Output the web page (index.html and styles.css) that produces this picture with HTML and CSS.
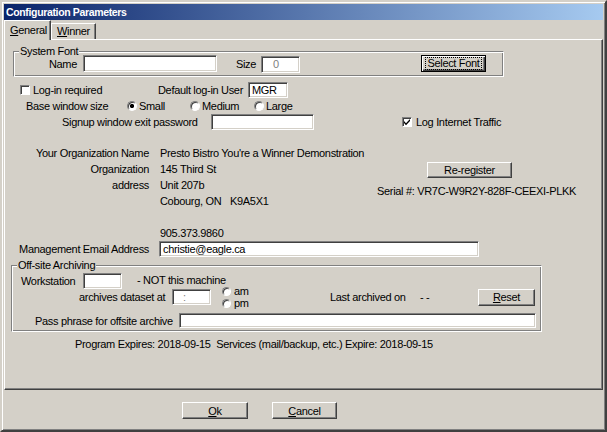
FILE: index.html
```html
<!DOCTYPE html>
<html>
<head>
<meta charset="utf-8">
<link rel="stylesheet" href="styles.css">
</head>
<body>
<div class="window">
  <div class="title">Configuration Parameters</div>
  <div class="tabs">
    <div class="tab sel"><u>G</u>eneral</div>
    <div class="tab t-winner"><u>W</u>inner</div>
  </div>
  <div class="panel">
    <div class="group g1">
      <span class="legend">System Font</span>
      <div class="row r-font">
        <span class="l-name">Name</span>
        <div class="field f-name"></div>
        <span class="l-size">Size</span>
        <div class="field f-size dim">0</div>
        <div class="btn default b-font"><span class="focus">Select Font</span></div>
      </div>
    </div>

    <div class="row r-login">
      <span class="check c-login"></span>
      <span class="t-login">Log-in required</span>
      <span class="t-user">Default log-in User</span>
      <div class="field f-user">MGR</div>
    </div>

    <div class="row r-size">
      <span class="t-base">Base window size</span>
      <span class="radio on"></span><span class="t-small">Small</span>
      <span class="radio"></span><span class="t-medium">Medium</span>
      <span class="radio"></span><span class="t-large">Large</span>
    </div>

    <div class="row r-signup">
      <span class="t-signup">Signup window exit password</span>
      <div class="field f-signup"></div>
      <span class="check c-traffic"><svg width="8" height="8" viewBox="0 0 8 8"><path d="M1 3 L3 5.2 L7 1 L7 3 L3 7.2 L1 5 Z" fill="#000"/></svg></span>
      <span class="t-traffic">Log Internet Traffic</span>
    </div>

    <div class="org">
      <div class="org-grid">
        <span class="k">Your Organization Name</span><span>Presto Bistro You're a Winner Demonstration</span>
        <span class="k">Organization</span><span>145 Third St</span>
        <span class="k">address</span><span>Unit 207b</span>
        <span class="k"></span><span class="city"><span class="c1">Cobourg, ON</span><span>K9A5X1</span></span>
        <span class="k"></span><span></span>
        <span class="k"></span><span>905.373.9860</span>
      </div>
      <div class="org-side">
        <div class="btn b-rereg">Re-register</div>
        <div class="serial">Serial #: VR7C-W9R2Y-828F-CEEXI-PLKK</div>
      </div>
    </div>

    <div class="row r-email">
      <span class="k">Management Email Address</span>
      <div class="field f-email">christie@eagle.ca</div>
    </div>

    <div class="group g2">
      <span class="legend">Off-site Archiving</span>
      <div class="row r-ws">
        <span class="t-ws">Workstation</span>
        <div class="field f-ws"></div>
        <span class="t-not">- NOT this machine</span>
      </div>
      <div class="row r-arch">
        <span class="t-arch">archives dataset at</span>
        <div class="field f-time dim">:</div>
        <div class="ampm">
          <div class="ap"><span class="radio"></span><span>am</span></div>
          <div class="ap"><span class="radio"></span><span>pm</span></div>
        </div>
        <span class="t-last">Last archived on</span>
        <span class="t-dash">- -</span>
        <div class="btn b-reset"><span><u>R</u>eset</span></div>
      </div>
      <div class="row r-pass">
        <span class="t-pass">Pass phrase for offsite archive</span>
        <div class="field f-pass"></div>
      </div>
    </div>

    <div class="expires">Program Expires: 2018-09-15&nbsp; Services (mail/backup, etc.) Expire: 2018-09-15</div>
  </div>

  <div class="actions">
    <div class="btn b-ok"><span><u>O</u>k</span></div>
    <div class="btn b-cancel"><span><u>C</u>ancel</span></div>
  </div>
</div>
</body>
</html>
```

FILE: styles.css
```css
* { box-sizing: border-box; }

body {
  margin: 0;
  background: #d4d0c8;
  font-family: "Liberation Sans", Arial, sans-serif;
  font-size: 11px;
  letter-spacing: -0.32px;
  color: #000;
}

u { text-decoration: underline; text-underline-offset: 1px; }

.window {
  width: 607px;
  height: 432px;
  padding: 2px;
  border: 2px solid;
  border-color: #d4d0c8 #404040 #404040 #d4d0c8;
  box-shadow: inset 1px 1px #fff, inset -1px -1px #808080;
}

.title {
  height: 16px;
  line-height: 16px;
  padding-left: 2px;
  background: linear-gradient(to right, #0a246a, #a6caf0);
  color: #fff;
  font-weight: bold;
  font-size: 10.5px;
  letter-spacing: -0.35px;
}

/* tabs */
.tabs {
  position: relative;
  z-index: 1;
  display: flex;
  align-items: flex-end;
  height: 19px;
}
.tab {
  height: 16px;
  line-height: 15px;
  padding-left: 5px;
  background: #d4d0c8;
  border-top: 1px solid #fff;
  border-left: 1px solid #fff;
  border-right: 1px solid #404040;
  box-shadow: inset -1px 0 #808080;
}
.tab.sel {
  width: 47px;
  height: 20px;
  line-height: 19px;
  margin-bottom: -1px;
}
.t-winner { width: 45px; }

/* panel */
.panel {
  height: 351px;
  border: 1px solid;
  border-color: #fff #404040 #404040 #fff;
  box-shadow: inset -1px -1px #808080;
}

.row {
  display: flex;
  align-items: center;
}

/* etched group box */
.group {
  position: relative;
  border: 1px solid;
  border-color: #808080 #fff #fff #808080;
  box-shadow: inset 1px 1px #fff, inset -1px -1px #808080;
}
.legend {
  position: absolute;
  top: -7px;
  left: 5px;
  padding: 0 1px;
  line-height: 13px;
  background: #d4d0c8;
}

/* controls */
.field {
  height: 16px;
  line-height: 14px;
  padding-left: 3px;
  background: #fff;
  border: 1px solid;
  border-color: #808080 #fff #fff #808080;
  box-shadow: inset 1px 1px #404040, inset -1px -1px #d4d0c8;
  flex: none;
}
.dim { color: #808080; }

.btn {
  flex: none;
  height: 17px;
  display: flex;
  align-items: center;
  justify-content: center;
  background: #d4d0c8;
  border: 1px solid;
  border-color: #fff #404040 #404040 #fff;
  box-shadow: inset -1px -1px #808080;
}
.btn.default {
  border-color: #000;
  box-shadow: inset 1px 1px #fff, inset -1px -1px #404040, inset -2px -2px #808080;
}
.focus {
  border: 1px dotted #000;
  padding: 0 1px;
  line-height: 11px;
}

.radio {
  flex: none;
  width: 10px;
  height: 10px;
  border-radius: 50%;
  background: #fff;
  border: 1px solid;
  border-color: #808080 #fff #fff #808080;
  box-shadow: inset 1px 1px #404040;
}
.radio.on {
  background: radial-gradient(circle, #000 0 1.8px, #fff 2.4px);
}

.check {
  flex: none;
  width: 10px;
  height: 10px;
  background: #fff;
  border: 1px solid;
  border-color: #808080 #fff #fff #808080;
  box-shadow: inset 1px 1px #404040;
  display: flex;
  align-items: center;
  justify-content: center;
}
.check svg { display: block; }

/* system font group */
.g1 {
  width: 491px;
  height: 26px;
  margin: 11px 0 0 8px;
}
.r-font { height: 17px; margin-top: 3px; }
.l-name { width: 63px; text-align: right; }
.f-name { width: 134px; height: 17px; margin-left: 6px; }
.l-size { width: 39px; text-align: right; }
.f-size { width: 39px; height: 17px; margin-left: 5px; padding-left: 11px; margin-top: 1px; }
.b-font { width: 65px; margin-left: 121px; }

/* log-in row */
.r-login { height: 16px; margin-top: 5px; }
.c-login { margin-left: 15px; }
.t-login { width: 125px; margin-left: 3px; }
.t-user { width: 90px; }
.f-user { width: 40px; }

/* base window size */
.r-size { height: 14px; margin-top: 1px; }
.t-base { width: 101px; margin-left: 21px; }
.t-small { width: 51px; margin-left: 2px; }
.t-medium { width: 52px; margin-left: 2px; }
.t-large { margin-left: 2px; }

/* signup */
.r-signup { height: 16px; margin-top: 1px; }
.t-signup { width: 149px; margin-left: 57px; }
.f-signup { width: 103px; }
.c-traffic { margin-left: 88px; }
.t-traffic { margin-left: 4px; }

/* organization */
.org {
  display: flex;
  margin-top: 15px;
}
.org-grid {
  width: 372px;
  display: grid;
  grid-template-columns: 144px 1fr;
  column-gap: 11px;
  grid-auto-rows: 16px;
  line-height: 16px;
}
.k { text-align: right; white-space: nowrap; }
.city { display: flex; }
.c1 { width: 70px; }
.org-side { padding-top: 17px; }
.b-rereg { width: 85px; height: 16px; margin-left: 50px; }
.serial { margin-top: 5px; line-height: 16px; }

.r-email { height: 16px; }
.r-email .k { width: 144px; }
.f-email { width: 320px; margin-left: 10px; }

/* off-site group */
.g2 {
  width: 531px;
  height: 67px;
  margin: 8px 0 0 6px;
}
.r-ws { height: 16px; margin-top: 7px; }
.t-ws { width: 62px; margin-left: 9px; }
.f-ws { width: 39px; }
.t-not { margin-left: 15px; margin-top: -2px; }

.r-arch { height: 16px; }
.t-arch { width: 93px; margin-left: 67px; }
.f-time { width: 39px; padding-left: 10px; }
.ampm {
  width: 109px;
  margin: -4px 0 -4px 10px;
  padding-left: 1px;
}
.ap {
  display: flex;
  align-items: center;
  height: 12px;
}
.ap .radio { width: 9px; height: 9px; margin-right: 3px; }
.t-last { width: 90px; }
.t-dash { width: 58px; }
.b-reset { width: 57px; }

.r-pass { height: 15px; margin-top: 8px; }
.t-pass { width: 144px; margin-left: 23px; }
.f-pass { width: 357px; height: 15px; }

.expires {
  margin: 4px 0 0 70px;
  line-height: 16px;
}

/* dialog buttons */
.actions {
  display: flex;
  margin-top: 12px;
}
.b-ok { width: 66px; margin-left: 178px; }
.b-cancel { width: 65px; margin-left: 24px; }
```
